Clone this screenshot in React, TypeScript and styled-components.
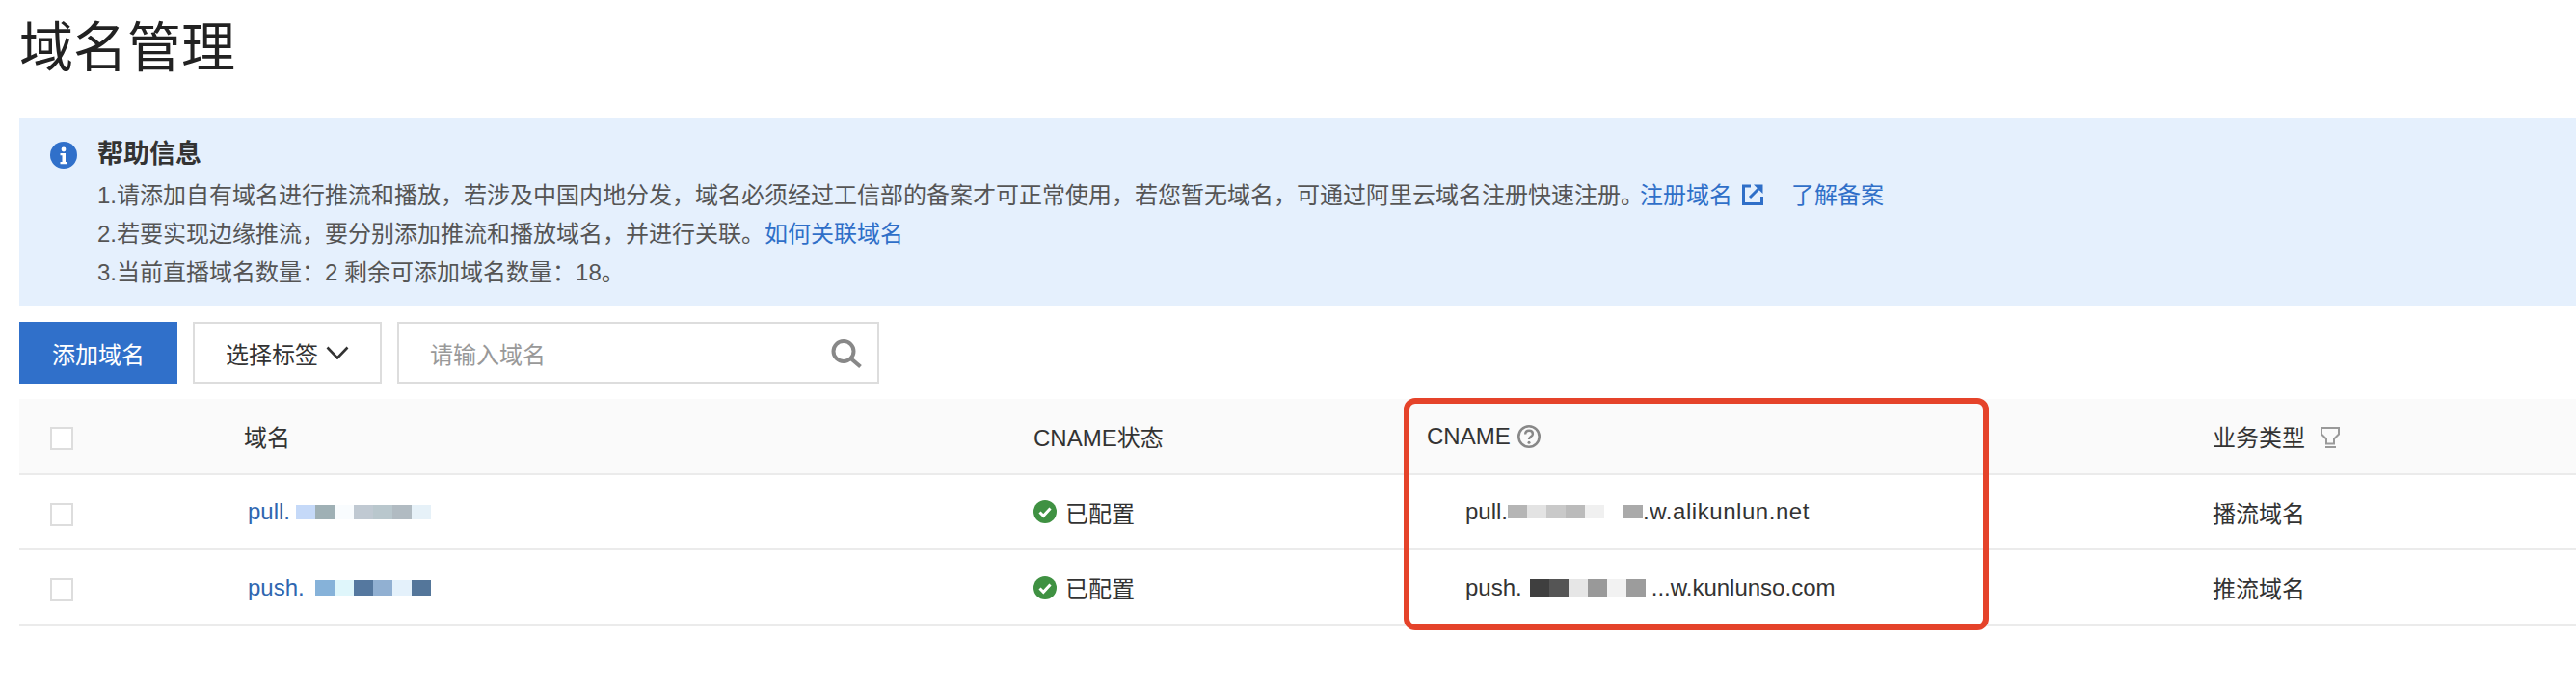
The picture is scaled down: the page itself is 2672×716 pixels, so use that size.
import styled, { createGlobalStyle } from 'styled-components';

const GlobalStyle = createGlobalStyle`
    html, body {
        margin: 0;
        padding: 0;
        background: #fff;
    }
    body {
        font-family: "Liberation Sans", "Noto Sans CJK SC", sans-serif;
        font-size: 24px;
        color: #333;
    }
`;

const Page = styled.div`
    position: relative;
    width: 2672px;
    height: 716px;
    padding-left: 20px;
    box-sizing: border-box;
    overflow: hidden;
`;

const Title = styled.h1`
    margin: 0 0 22px;
    height: 100px;
    font-size: 56px;
    font-weight: 400;
    line-height: 100px;
    color: #222;
`;

const HelpBanner = styled.div`
    display: flex;
    gap: 21px;
    height: 196px;
    padding: 25px 0 0 32px;
    box-sizing: border-box;
    background: #e5f0fd;
`;

const HelpBody = styled.div`
    display: flex;
    flex-direction: column;
`;

const HelpTitle = styled.div`
    height: 36px;
    font-size: 27px;
    font-weight: 700;
    line-height: 26px;
    color: #333;
`;

const HelpLine = styled.div`
    height: 40px;
    line-height: 40px;
    color: #555;
    white-space: nowrap;
`;

const Link = styled.a<{ $gap?: number }>`
    color: #2f6fc8;
    text-decoration: none;
    margin-left: ${(p) => p.$gap ?? 0}px;
`;

const ExternalIcon = styled.svg`
    width: 22px;
    height: 22px;
    margin-left: 10px;
    vertical-align: -2px;
`;

const Toolbar = styled.div`
    display: flex;
    gap: 16px;
    height: 64px;
    margin: 16px 0;
`;

const PrimaryButton = styled.button`
    width: 164px;
    border: 0;
    padding: 0;
    background: #3070ca;
    color: #fff;
    font: inherit;
`;

const SelectButton = styled.button`
    display: flex;
    align-items: center;
    gap: 8px;
    width: 196px;
    padding: 0 0 0 32px;
    box-sizing: border-box;
    border: 2px solid #ddd;
    background: #fff;
    color: #333;
    font: inherit;
`;

const SearchBox = styled.div`
    display: flex;
    align-items: center;
    justify-content: space-between;
    width: 500px;
    padding: 0 16px 0 32px;
    box-sizing: border-box;
    border: 2px solid #ddd;
    color: #999;
`;

const Row = styled.div<{ $head?: boolean; $height: number }>`
    display: grid;
    grid-template-columns: 233px 819px 408px 815px 1fr;
    align-items: center;
    height: ${(p) => p.$height}px;
    box-sizing: border-box;
    border-bottom: 2px solid #ebebeb;
    background: ${(p) => (p.$head ? '#fafafa' : '#fff')};
    color: #333;
`;

const Checkbox = styled.span`
    display: block;
    width: 24px;
    height: 24px;
    margin: 5px 0 0 32px;
    box-sizing: border-box;
    border: 2px solid #ddd;
    background: #fff;
`;

const Cell = styled.div<{ $inset?: number }>`
    display: flex;
    align-items: center;
    white-space: nowrap;
    padding-left: ${(p) => p.$inset ?? 0}px;
`;

const DomainLink = styled.a`
    display: flex;
    align-items: center;
    padding-left: 4px;
    color: #2f66b0;
    text-decoration: none;
`;

const Mosaic = styled.span<{ $before?: number; $after?: number }>`
    display: inline-flex;
    margin: 0 ${(p) => p.$after ?? 0}px 0 ${(p) => p.$before ?? 0}px;
`;

const Tile = styled.span<{ $color: string; $height: number }>`
    display: block;
    width: 20px;
    height: ${(p) => p.$height}px;
    background: ${(p) => p.$color};
`;

const WideText = styled.span`
    letter-spacing: 0.55px;
`;

const StatusIcon = styled.svg`
    width: 24px;
    height: 24px;
    margin-right: 9px;
`;

const HeadIcon = styled.svg<{ $gap: number }>`
    width: 24px;
    height: 24px;
    margin-left: ${(p) => p.$gap}px;
`;

const Highlight = styled.div`
    position: absolute;
    left: 1456px;
    top: 413px;
    width: 607px;
    height: 241px;
    box-sizing: border-box;
    border: 6px solid #e5432a;
    border-radius: 12px;
`;

const InfoIcon = () => (
    <svg width="28" height="28" viewBox="0 0 28 28" style={{ flex: 'none' }}>
        <circle cx="14" cy="14" r="14" fill="#3070ca" />
        <circle cx="14" cy="8" r="2.400" fill="#fff" />
        <path d="M10.500 12h5.500v9h2v2.200h-7.500V21h2v-6.800h-2z" fill="#fff" />
    </svg>
);

const CheckIcon = () => (
    <StatusIcon viewBox="0 0 24 24">
        <circle cx="12" cy="12" r="12" fill="#3f9142" />
        <path d="M6.500 12.500l3.800 3.800 7.200-7.800" fill="none" stroke="#fff" strokeWidth="3" />
    </StatusIcon>
);

const renderTiles = (colors: string[], height: number) =>
    colors.map((color, i) => <Tile key={i} $color={color} $height={height} />);

export default function App() {
    return (
        <Page>
            <GlobalStyle />
            <Title>域名管理</Title>
            <HelpBanner>
                <InfoIcon />
                <HelpBody>
                    <HelpTitle>帮助信息</HelpTitle>
                    <HelpLine>
                        1.请添加自有域名进行推流和播放，若涉及中国内地分发，域名必须经过工信部的备案才可正常使用，若您暂无域名，可通过阿里云域名注册快速注册。
                        <Link href="#" $gap={-4}>注册域名</Link>
                        <ExternalIcon viewBox="0 0 22 22">
                            <path d="M9 2H1.500v18.500h19V13" fill="none" stroke="#2f6fc8" strokeWidth="3" />
                            <path d="M8 14l9-9" fill="none" stroke="#2f6fc8" strokeWidth="3" />
                            <path d="M12 0.500h9.500V10z" fill="#2f6fc8" />
                        </ExternalIcon>
                        <Link href="#" $gap={29}>了解备案</Link>
                    </HelpLine>
                    <HelpLine>
                        2.若要实现边缘推流，要分别添加推流和播放域名，并进行关联。<Link href="#">如何关联域名</Link>
                    </HelpLine>
                    <HelpLine>3.当前直播域名数量：2 剩余可添加域名数量：18。</HelpLine>
                </HelpBody>
            </HelpBanner>
            <Toolbar>
                <PrimaryButton>添加域名</PrimaryButton>
                <SelectButton>
                    选择标签
                    <svg width="24" height="14" viewBox="0 0 24 14">
                        <path d="M1.500 1.500L12 12.500 22.500 1.500" fill="none" stroke="#333" strokeWidth="2.600" />
                    </svg>
                </SelectButton>
                <SearchBox>
                    请输入域名
                    <svg width="32" height="32" viewBox="0 0 32 32">
                        <circle cx="13" cy="14.500" r="10.500" fill="none" stroke="#888" strokeWidth="4" />
                        <path d="M20.500 22L30.500 30.500" stroke="#888" strokeWidth="4" />
                    </svg>
                </SearchBox>
            </Toolbar>
            <div>
                <Row $head $height={79}>
                    <Checkbox />
                    <Cell>域名</Cell>
                    <Cell>CNAME状态</Cell>
                    <Cell>
                        CNAME
                        <HeadIcon $gap={7} viewBox="0 0 24 24">
                            <circle cx="12" cy="12" r="10.700" fill="none" stroke="#888" strokeWidth="2.600" />
                            <path d="M8.200 9.500c0-2.300 1.700-3.700 3.900-3.700s3.800 1.400 3.800 3.400c0 2.900-3.900 2.800-3.900 5.800" fill="none" stroke="#888" strokeWidth="2.400" />
                            <circle cx="12" cy="18.200" r="1.500" fill="#888" />
                        </HeadIcon>
                    </Cell>
                    <Cell>
                        业务类型
                        <HeadIcon $gap={15} viewBox="0 0 24 24">
                            <path d="M2 3h18v6.500l-5 5v5H7v-5l-5-5z" fill="none" stroke="#999" strokeWidth="2" />
                            <path d="M6 23h11" stroke="#999" strokeWidth="2" />
                        </HeadIcon>
                    </Cell>
                </Row>
                <Row $height={78}>
                    <Checkbox />
                    <DomainLink href="#">
                        pull.
                        <Mosaic $before={6}>
                            {renderTiles(['#c5d9f8', '#9fb0b5', '#f9fcfe', '#c0c9d2', '#b9c7cd', '#b1bbc2', '#e6f1f8'], 15)}
                        </Mosaic>
                    </DomainLink>
                    <Cell>
                        <CheckIcon />
                        已配置
                    </Cell>
                    <Cell $inset={40}>
                        pull.
                        <Mosaic>
                            {renderTiles(['#b5b5b5', '#e3e3e3', '#c9c9c9', '#bbbbbb', '#f0f0f0', '#ffffff', '#aaaaaa'], 14)}
                        </Mosaic>
                        <WideText>.w.alikunlun.net</WideText>
                    </Cell>
                    <Cell>播流域名</Cell>
                </Row>
                <Row $height={79}>
                    <Checkbox />
                    <DomainLink href="#">
                        push.
                        <Mosaic $before={11}>
                            {renderTiles(['#86b2d9', '#dff6fb', '#55789f', '#91b0d2', '#e4f1fb', '#54769a'], 16)}
                        </Mosaic>
                    </DomainLink>
                    <Cell>
                        <CheckIcon />
                        已配置
                    </Cell>
                    <Cell $inset={40}>
                        push.
                        <Mosaic $before={8} $after={6}>
                            {renderTiles(['#3f3f3f', '#555555', '#e6e6e6', '#999999', '#f2f2f2', '#9c9c9c'], 18)}
                        </Mosaic>
                        ...w.kunlunso.com
                    </Cell>
                    <Cell>推流域名</Cell>
                </Row>
            </div>
            <Highlight />
        </Page>
    );
}
